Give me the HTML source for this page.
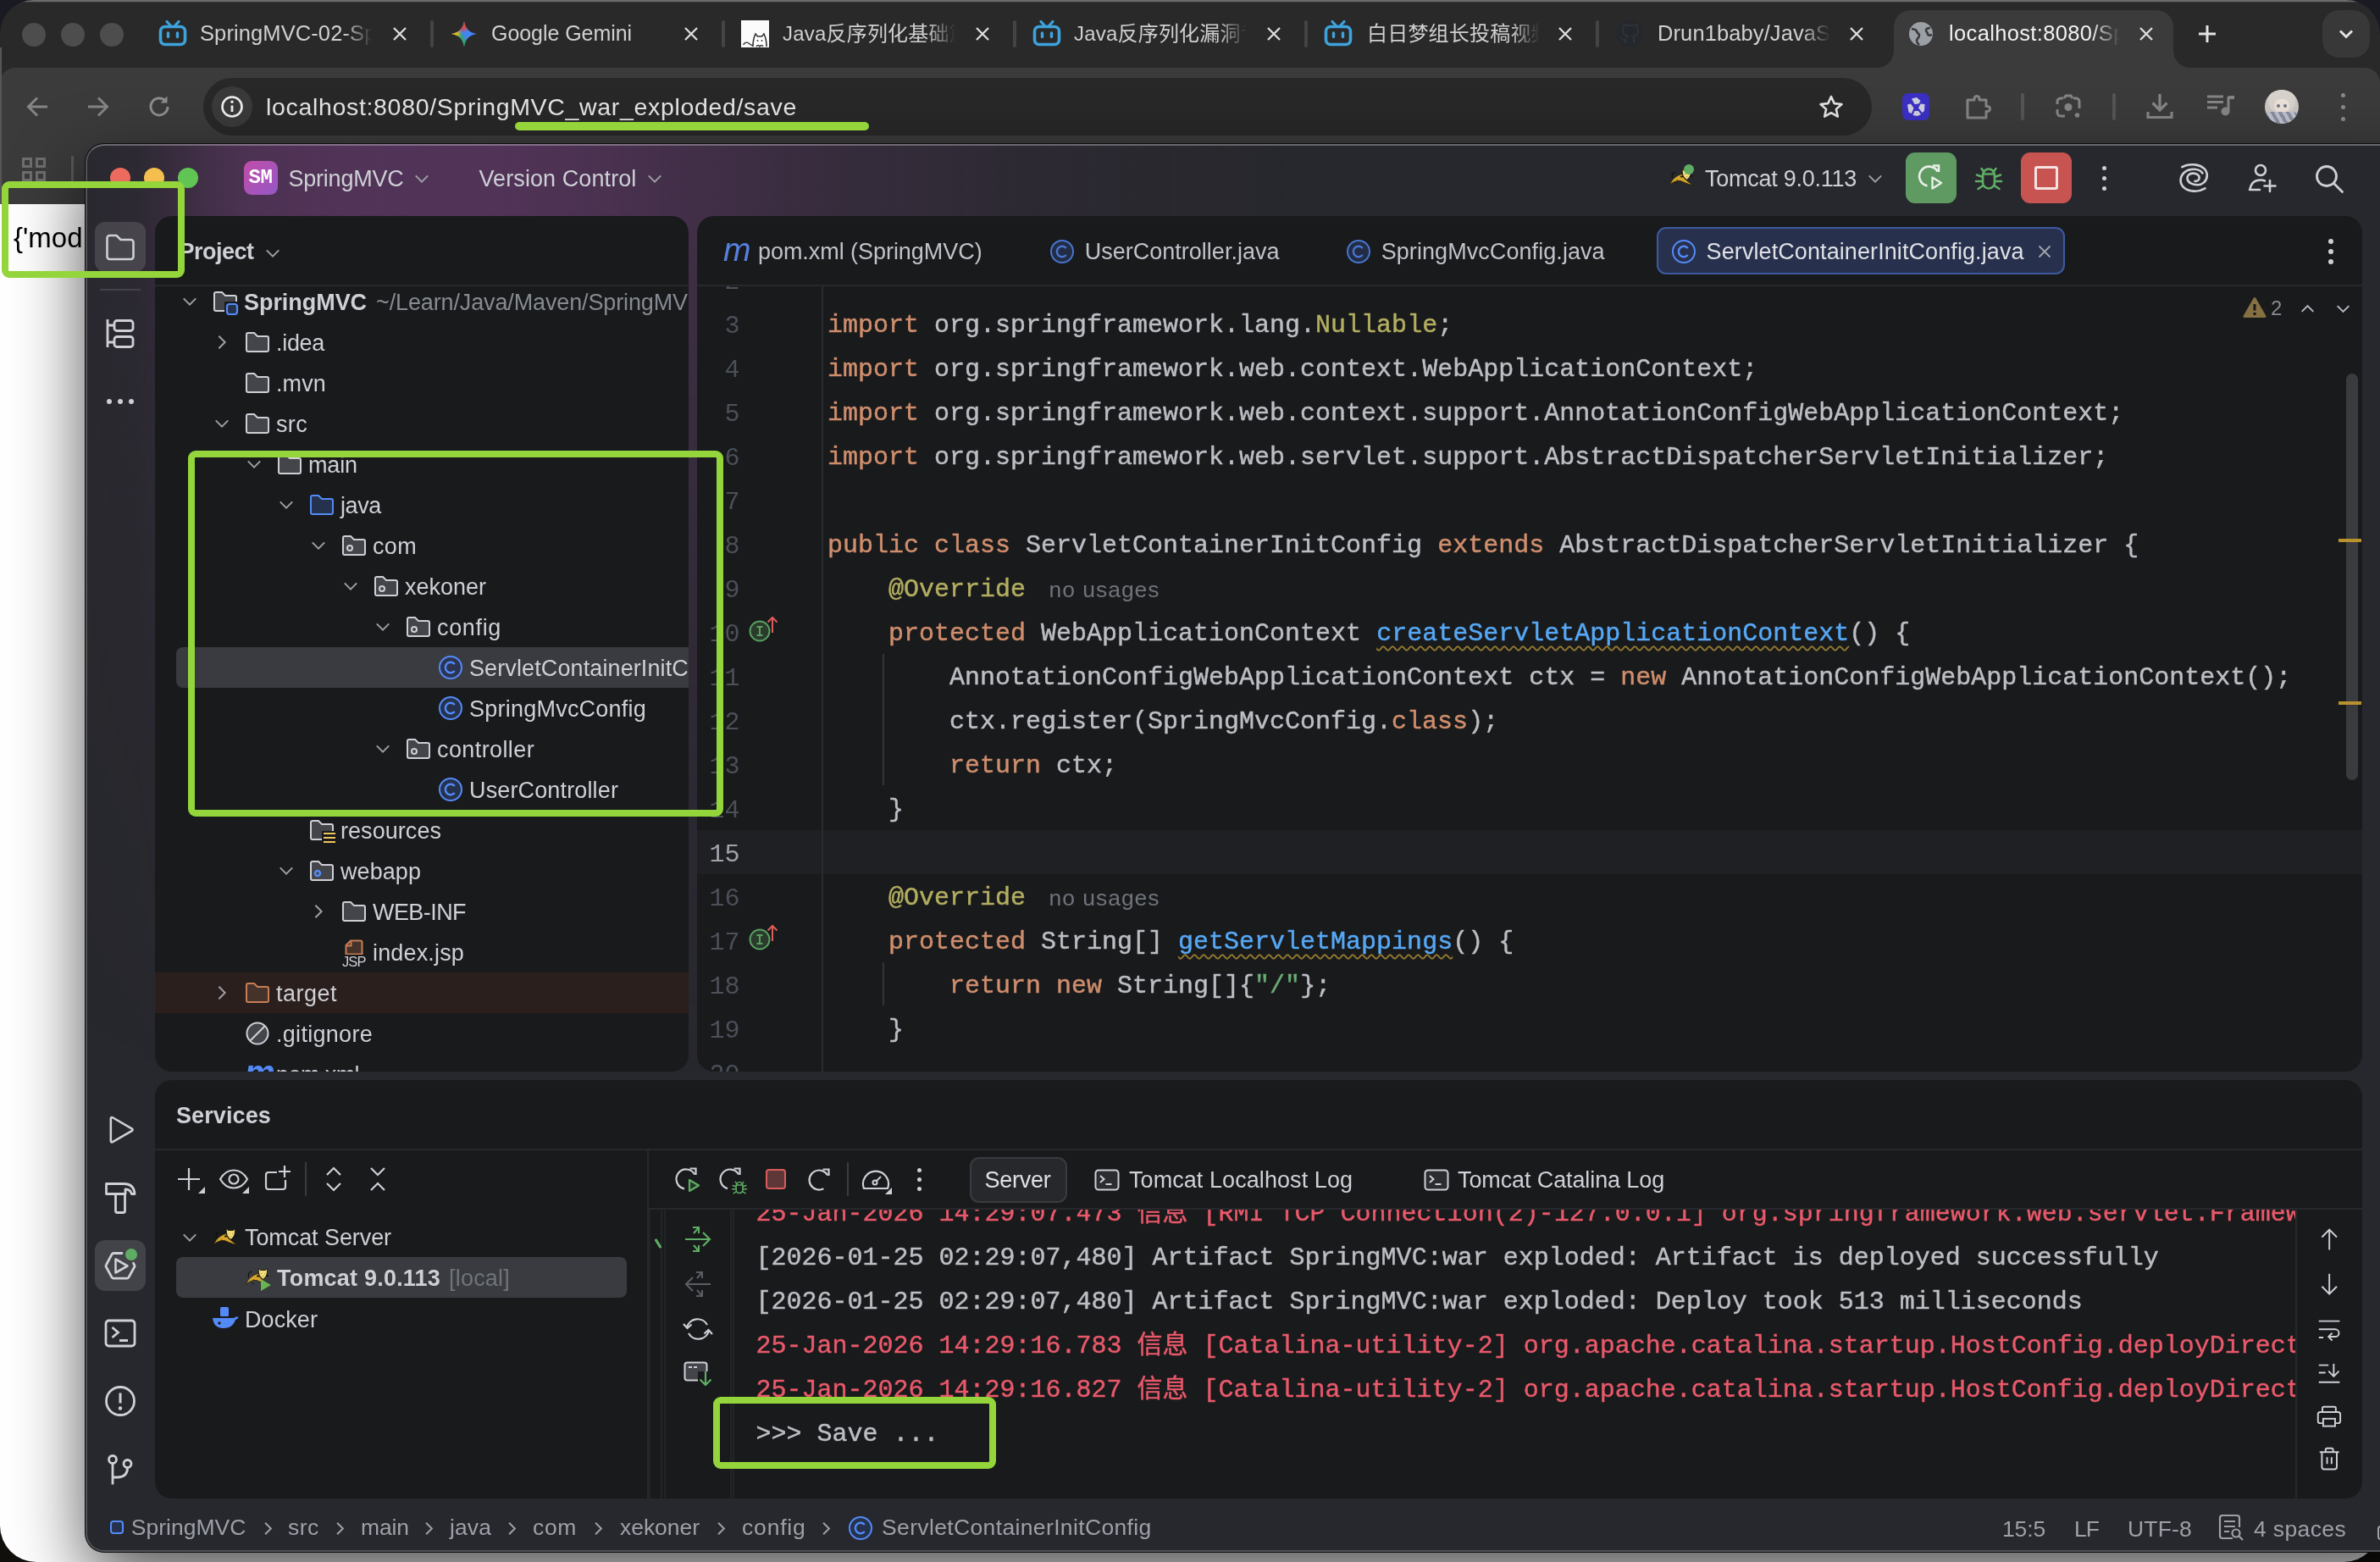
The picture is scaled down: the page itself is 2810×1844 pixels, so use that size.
<!DOCTYPE html>
<html lang="zh"><head><meta charset="utf-8"><title>localhost:8080/SpringMVC_war_exploded/save</title><style>
html,body{margin:0;padding:0;background:#17171b;}
body{width:2810px;height:1844px;position:relative;overflow:hidden;}
#root{position:absolute;left:0;top:0;width:2810px;height:1844px;overflow:hidden;will-change:transform;transform:translateZ(0);}
.a{position:absolute;white-space:nowrap;}
svg.a{overflow:visible;}
.u{font-family:"Liberation Sans","Noto Sans CJK SC",sans-serif;}
.t{font-family:"Liberation Sans","Noto Sans CJK SC",sans-serif;}
.m{font-family:"Liberation Mono","Noto Sans CJK SC",monospace;}
.code{font-size:30px;line-height:52px;white-space:pre;color:#bcbec4;-webkit-text-stroke:0.45px currentColor;}
</style></head><body><div id="root">
<div class="a" style="left:0;top:0;width:2810px;height:1844px;background:linear-gradient(180deg,#1a1a22,#12100c)"></div>
<div class="a" id="bw" style="left:0px;top:0;width:2810px;height:1844px;border-radius:40px 40px 43px 43px;background:#292929;overflow:hidden;">
<div class="a" style="left:0px;top:0;width:2810px;height:1852px">
<div class="a " style="left:0px;top:0px;width:2810px;height:2px;background:#6b6b6b;"></div>
<div class="a " style="left:0px;top:2px;width:2810px;height:1px;background:#3a3a3a;"></div>
<div class="a " style="left:0px;top:80px;width:2810px;height:161px;background:#3b3b3b;border-radius:18px 18px 0 0;"></div>
<div class="a " style="left:0px;top:56px;width:2px;height:185px;background:#565656;"></div>
<div class="a " style="left:0px;top:241px;width:2810px;height:1611px;background:#ffffff;"></div>
<div class="a " style="left:2236px;top:12px;width:330px;height:80px;background:#3b3b3b;border-radius:20px 20px 0 0;"></div>
<svg class="a" style="left:2216px;top:60px" width="20" height="20"><path d="M20 0 V20 H0 A20 20 0 0 0 20 0Z" fill="#3b3b3b"/></svg>
<svg class="a" style="left:2566px;top:60px" width="20" height="20"><path d="M0 0 V20 H20 A20 20 0 0 1 0 0Z" fill="#3b3b3b"/></svg>
<div class="a " style="left:2742px;top:12px;width:56px;height:56px;background:#383838;border-radius:20px;"></div>
<svg class="a" style="left:2758.0px;top:28.0px;" width="24" height="24" viewBox="0 0 24 24" fill="none"><path d="M5 8.5l7 7 7-7" stroke="#e3e3e3" stroke-width="3"/></svg>
<div class="a " style="left:26px;top:27px;width:28px;height:28px;background:#4d4d4d;border-radius:14px;"></div>
<div class="a " style="left:72px;top:27px;width:28px;height:28px;background:#4d4d4d;border-radius:14px;"></div>
<div class="a " style="left:118px;top:27px;width:28px;height:28px;background:#4d4d4d;border-radius:14px;"></div>
<div class="a t" style="left:236px;top:21px;width:204px;height:40px;line-height:37px;font-size:25.5px;color:#d0d0d0;overflow:hidden;white-space:nowrap;letter-spacing:0.1px">SpringMVC-02-Sp</div>
<div class="a" style="left:406px;top:22px;width:34px;height:40px;background:linear-gradient(90deg,rgba(0,0,0,0),#292929)"></div>
<svg class="a" style="left:461.0px;top:29.0px;" width="22" height="22" viewBox="0 0 22 22" fill="none"><path d="M4 4l14 14M18 4L4 18" stroke="#dedede" stroke-width="2.3"/></svg>
<div class="a " style="left:508px;top:24px;width:4px;height:32px;background:#444444;border-radius:2px;"></div>
<svg class="a" style="left:187.0px;top:23.0px;" width="34" height="34" viewBox="0 0 34 34" fill="none"><path d="M10 2.5l4.5 5M24 2.5l-4.5 5" stroke="#3ea3dc" stroke-width="3.2" stroke-linecap="round"/><rect x="2.5" y="8.5" width="29" height="21" rx="5.5" stroke="#3ea3dc" stroke-width="3.6"/><path d="M11.5 16v4.5M22.5 16v4.5" stroke="#3ea3dc" stroke-width="3.4" stroke-linecap="round"/></svg>
<div class="a t" style="left:580px;top:21px;width:200px;height:40px;line-height:37px;font-size:25px;color:#d0d0d0;overflow:hidden;white-space:nowrap;letter-spacing:-0.05px">Google Gemini</div>
<svg class="a" style="left:805.0px;top:29.0px;" width="22" height="22" viewBox="0 0 22 22" fill="none"><path d="M4 4l14 14M18 4L4 18" stroke="#dedede" stroke-width="2.3"/></svg>
<div class="a " style="left:852px;top:24px;width:4px;height:32px;background:#444444;border-radius:2px;"></div>
<svg class="a" style="left:533.0px;top:25.0px;" width="30" height="30" viewBox="0 0 30 30" fill="none"><defs><clipPath id="gs"><path d="M15 0C16.600 9 21 13.400 30 15 21 16.600 16.600 21 15 30 13.400 21 9 16.600 0 15 9 13.400 13.400 9 15 0Z"/></clipPath><radialGradient id="gr"><stop offset="0" stop-color="#ea4335"/><stop offset="0.55" stop-color="#ea4335" stop-opacity="0.85"/><stop offset="1" stop-color="#ea4335" stop-opacity="0"/></radialGradient><radialGradient id="gy"><stop offset="0" stop-color="#fbbc04"/><stop offset="0.55" stop-color="#fbbc04" stop-opacity="0.85"/><stop offset="1" stop-color="#fbbc04" stop-opacity="0"/></radialGradient><radialGradient id="gn"><stop offset="0" stop-color="#34a853"/><stop offset="0.55" stop-color="#34a853" stop-opacity="0.85"/><stop offset="1" stop-color="#34a853" stop-opacity="0"/></radialGradient></defs><g clip-path="url(#gs)"><rect width="30" height="30" fill="#4285f4"/><circle cx="6" cy="24" r="13" fill="url(#gn)"/><circle cx="13" cy="2" r="12" fill="url(#gr)"/><circle cx="1" cy="14" r="11" fill="url(#gy)"/><circle cx="14" cy="30" r="9" fill="url(#gn)"/></g></svg>
<div class="a t" style="left:924px;top:21px;width:204px;height:40px;line-height:37px;font-size:24px;color:#d0d0d0;overflow:hidden;white-space:nowrap;letter-spacing:0.2px">Java反序列化基础篇</div>
<div class="a" style="left:1094px;top:22px;width:34px;height:40px;background:linear-gradient(90deg,rgba(0,0,0,0),#292929)"></div>
<svg class="a" style="left:1149.0px;top:29.0px;" width="22" height="22" viewBox="0 0 22 22" fill="none"><path d="M4 4l14 14M18 4L4 18" stroke="#dedede" stroke-width="2.3"/></svg>
<div class="a " style="left:1196px;top:24px;width:4px;height:32px;background:#444444;border-radius:2px;"></div>
<div class="a " style="left:875px;top:24px;width:33px;height:32px;background:#fbfbfb;"></div>
<svg class="a" style="left:875.5px;top:29.0px;" width="33" height="26" viewBox="0 0 33 26" fill="none"><path d="M13 26c0-6 1-11 3-15l2.500 3h5l2.500-3c2 4 3 9 3 15" stroke="#333" stroke-width="1.600" fill="#fff"/><path d="M2 24c0-3 4-3.500 6-2 1.500 1 3 3 5 3" stroke="#333" stroke-width="1.400"/><circle cx="18.500" cy="19" r="0.900" fill="#333"/><circle cx="23.500" cy="19" r="0.900" fill="#333"/><path d="M17 26c1-2 3-2 4 0 1-2 3-2 4 0" stroke="#333" stroke-width="1.300"/></svg>
<div class="a t" style="left:1268px;top:21px;width:204px;height:40px;line-height:37px;font-size:24px;color:#d0d0d0;overflow:hidden;white-space:nowrap;letter-spacing:0.2px">Java反序列化漏洞专</div>
<div class="a" style="left:1438px;top:22px;width:34px;height:40px;background:linear-gradient(90deg,rgba(0,0,0,0),#292929)"></div>
<svg class="a" style="left:1493.0px;top:29.0px;" width="22" height="22" viewBox="0 0 22 22" fill="none"><path d="M4 4l14 14M18 4L4 18" stroke="#dedede" stroke-width="2.3"/></svg>
<div class="a " style="left:1540px;top:24px;width:4px;height:32px;background:#444444;border-radius:2px;"></div>
<svg class="a" style="left:1219.0px;top:23.0px;" width="34" height="34" viewBox="0 0 34 34" fill="none"><path d="M10 2.5l4.5 5M24 2.5l-4.5 5" stroke="#3ea3dc" stroke-width="3.2" stroke-linecap="round"/><rect x="2.5" y="8.5" width="29" height="21" rx="5.5" stroke="#3ea3dc" stroke-width="3.6"/><path d="M11.5 16v4.5M22.5 16v4.5" stroke="#3ea3dc" stroke-width="3.4" stroke-linecap="round"/></svg>
<div class="a t" style="left:1614px;top:21px;width:204px;height:40px;line-height:37px;font-size:24px;color:#d0d0d0;overflow:hidden;white-space:nowrap;letter-spacing:0.2px">白日梦组长投稿视频</div>
<div class="a" style="left:1784px;top:22px;width:34px;height:40px;background:linear-gradient(90deg,rgba(0,0,0,0),#292929)"></div>
<svg class="a" style="left:1837.0px;top:29.0px;" width="22" height="22" viewBox="0 0 22 22" fill="none"><path d="M4 4l14 14M18 4L4 18" stroke="#dedede" stroke-width="2.3"/></svg>
<div class="a " style="left:1884px;top:24px;width:4px;height:32px;background:#444444;border-radius:2px;"></div>
<svg class="a" style="left:1563.0px;top:23.0px;" width="34" height="34" viewBox="0 0 34 34" fill="none"><path d="M10 2.5l4.5 5M24 2.5l-4.5 5" stroke="#3ea3dc" stroke-width="3.2" stroke-linecap="round"/><rect x="2.5" y="8.5" width="29" height="21" rx="5.5" stroke="#3ea3dc" stroke-width="3.6"/><path d="M11.5 16v4.5M22.5 16v4.5" stroke="#3ea3dc" stroke-width="3.4" stroke-linecap="round"/></svg>
<div class="a t" style="left:1957px;top:21px;width:204px;height:40px;line-height:37px;font-size:25.5px;color:#d0d0d0;overflow:hidden;white-space:nowrap;letter-spacing:0.1px">Drun1baby/JavaSec</div>
<div class="a" style="left:2127px;top:22px;width:34px;height:40px;background:linear-gradient(90deg,rgba(0,0,0,0),#292929)"></div>
<svg class="a" style="left:2181.0px;top:29.0px;" width="22" height="22" viewBox="0 0 22 22" fill="none"><path d="M4 4l14 14M18 4L4 18" stroke="#dedede" stroke-width="2.3"/></svg>
<svg class="a" style="left:1908.0px;top:24.0px;" width="32" height="32" viewBox="0 0 32 32" fill="none"><circle cx="16" cy="16" r="15.5" fill="#24272c"/><path d="M11 27v-4c-4 1-5-2-6-3M21 27v-5c0-2-1-3-1-3 4-.5 6-2.500 6-6.500 0-1.500-.5-3-1.500-4 .3-1 .3-2.500-.2-3.500 0 0-1.500 0-3.500 1.500-2.500-.700-5-.700-7.500 0C11 4.500 9.500 4.500 9.500 4.500 9 5.500 9 7 9.300 8 8.300 9 7.800 10.500 7.800 12c0 4 2 6 6 6.500-.500.500-1 1.500-1 3" stroke="#2f3339" stroke-width="2"/></svg>
<div class="a t" style="left:2301px;top:21px;width:202px;height:40px;line-height:37px;font-size:25.5px;color:#f1f1f1;overflow:hidden;white-space:nowrap;letter-spacing:0.35px">localhost:8080/SpringMVC</div>
<div class="a" style="left:2469px;top:22px;width:34px;height:40px;background:linear-gradient(90deg,rgba(0,0,0,0),#3b3b3b)"></div>
<svg class="a" style="left:2523.0px;top:29.0px;" width="22" height="22" viewBox="0 0 22 22" fill="none"><path d="M4 4l14 14M18 4L4 18" stroke="#dedede" stroke-width="2.3"/></svg>
<svg class="a" style="left:2253.0px;top:25.0px;" width="30" height="30" viewBox="0 0 30 30" fill="none"><circle cx="15" cy="15" r="14" fill="#9aa0a6"/><path d="M4 9c3 1 5 0 6 3s3 2 3 5-3 3-3 6 2 4 3 5M26 8c-3 0-5 1-5 3s2 2 2 4 3 2 5 1" stroke="#3b3b3b" stroke-width="2.6" fill="none"/></svg>
<svg class="a" style="left:2591.0px;top:25.0px;" width="30" height="30" viewBox="0 0 30 30" fill="none"><path d="M15 5v20M5 15h20" stroke="#e3e3e3" stroke-width="3"/></svg>
<div class="a " style="left:240px;top:92px;width:1970px;height:68px;background:#282828;border-radius:34px;"></div>
<div class="a " style="left:250px;top:102px;width:48px;height:48px;background:#3a3a3a;border-radius:24px;"></div>
<svg class="a" style="left:260.0px;top:112.0px;" width="28" height="28" viewBox="0 0 28 28" fill="none"><circle cx="14" cy="14" r="11.5" stroke="#f0f0f0" stroke-width="2.6"/><path d="M14 12.500v7.500" stroke="#f0f0f0" stroke-width="2.8"/><circle cx="14" cy="8.300" r="1.700" fill="#f0f0f0"/></svg>
<div class="a t" style="top:106.0px;line-height:40px;font-size:28.5px;color:#e6e6e6;left:314.0px;letter-spacing:0.67px;">localhost:8080/SpringMVC_war_exploded/save</div>
<svg class="a" style="left:30.0px;top:112.0px;" width="28" height="28" viewBox="0 0 28 28" fill="none"><path d="M26 14H4M14 3.500L3.500 14 14 24.500" stroke="#858585" stroke-width="3"/></svg>
<svg class="a" style="left:102.0px;top:112.0px;" width="28" height="28" viewBox="0 0 28 28" fill="none"><path d="M2 14h22M14 3.500L24.500 14 14 24.500" stroke="#858585" stroke-width="3"/></svg>
<svg class="a" style="left:173.0px;top:111.0px;" width="30" height="30" viewBox="0 0 30 30" fill="none"><path d="M25 15a10 10 0 1 1-3-7.200" stroke="#8d8d8d" stroke-width="3"/><path d="M24.500 2.500v8h-8z" fill="#8d8d8d"/></svg>
<svg class="a" style="left:2147.0px;top:111.0px;" width="30" height="30" viewBox="0 0 30 30" fill="none"><path d="M15 3l3.700 8.100 8.800.9-6.600 5.900 1.900 8.700L15 22.200 7.200 26.600l1.900-8.700L2.500 12l8.800-.9z" stroke="#e3e3e3" stroke-width="2.600" stroke-linejoin="round"/></svg>
<div class="a " style="left:2246px;top:110px;width:32px;height:32px;background:#3b30c4;border-radius:7px;"></div>
<svg class="a" style="left:2246.0px;top:110.0px;" width="32" height="32" viewBox="0 0 32 32" fill="none"><g fill="#cfcfe0"><path d="M11 6.500l6-1.500 4.500 4-2 3.500-5 .5z"/><path d="M6 13.500l4-1 3.500 5-2.500 6.500-3.500-1.500z"/><path d="M26.500 13l-5-.5-2.500 5 4.500 5.500 2.500-2z"/><path d="M12.500 26l2-5h4.500l3 4-4 2z"/></g></svg>
<svg class="a" style="left:2318.0px;top:109.0px;" width="34" height="34" viewBox="0 0 34 34" fill="none"><path d="M5 9h8V7.500a3 3 0 0 1 6 0V9h8v7.500h1.500a3 3 0 0 1 0 6H27V30H5z" stroke="#858585" stroke-width="3" stroke-linejoin="round"/></svg>
<div class="a " style="left:2386px;top:110px;width:4px;height:32px;background:#555;border-radius:2px;"></div>
<svg class="a" style="left:2425.0px;top:109.0px;" width="34" height="34" viewBox="0 0 34 34" fill="none"><path d="M12 7l2-3h6l2 3" stroke="#858585" stroke-width="3"/><path d="M11 7H8a4 4 0 0 0-4 4v3M4 20v4a4 4 0 0 0 4 4h5M23 7h3a4 4 0 0 1 4 4v8" stroke="#858585" stroke-width="3"/><circle cx="17" cy="17.500" r="4.500" fill="#858585"/><circle cx="27.500" cy="27" r="2.800" fill="#858585"/></svg>
<div class="a " style="left:2494px;top:110px;width:4px;height:32px;background:#555;border-radius:2px;"></div>
<svg class="a" style="left:2533.0px;top:109.0px;" width="34" height="34" viewBox="0 0 34 34" fill="none"><path d="M17 2v18M8.500 12.500L17 21l8.500-8.500M3 23v6.500h28V23" stroke="#858585" stroke-width="3.200"/></svg>
<svg class="a" style="left:2605.0px;top:110.0px;" width="34" height="28" viewBox="0 0 34 28" fill="none"><path d="M1 4h19M1 10.500h19M1 17h12" stroke="#858585" stroke-width="3"/><path d="M26 4v17" stroke="#858585" stroke-width="3"/><path d="M26 3h7v4h-7z" fill="#858585"/><circle cx="22.500" cy="21.500" r="5" fill="#858585"/></svg>
<div class="a" style="left:2674px;top:106px;width:40px;height:40px;border-radius:20px;overflow:hidden;background:#c9c6c4"><div class="a" style="left:4px;top:-2px;width:32px;height:30px;border-radius:16px;background:#d9d3cd"></div><div class="a" style="left:11px;top:11px;width:18px;height:16px;border-radius:8px;background:#ece2da"></div><div class="a" style="left:14px;top:17px;width:4px;height:4px;border-radius:2px;background:#6d7487"></div><div class="a" style="left:22px;top:17px;width:4px;height:4px;border-radius:2px;background:#6d7487"></div><div class="a" style="left:-2px;top:26px;width:44px;height:18px;border-radius:9px 9px 0 0;background:repeating-linear-gradient(60deg,#8a90a2 0 4px,#bfc3cd 4px 8px)"></div></div>
<div class="a " style="left:2763.5px;top:109.5px;width:5px;height:5px;background:#8a8a8a;border-radius:3px;"></div>
<div class="a " style="left:2763.5px;top:123.5px;width:5px;height:5px;background:#8a8a8a;border-radius:3px;"></div>
<div class="a " style="left:2763.5px;top:137.5px;width:5px;height:5px;background:#8a8a8a;border-radius:3px;"></div>
<svg class="a" style="left:25.0px;top:185.0px;" width="30" height="30" viewBox="0 0 30 30" fill="none"><path d="M2.500 2.500h9v9h-9zM18.500 2.500h9v9h-9zM2.500 18.500h9v9h-9zM18.500 18.500h9v9h-9z" stroke="#6e6e6e" stroke-width="3"/></svg>
<div class="a " style="left:84px;top:184px;width:3px;height:34px;background:#5a5a5a;border-radius:1px;"></div>
<div class="a t" style="top:261.0px;line-height:40px;font-size:33px;color:#000;left:16.0px;">{'mod</div>
</div></div>
<div class="a" style="left:101px;top:170px;width:2760px;height:1662px;border-radius:22px;background:#27282d;box-shadow:0 0 0 1px #0b0b0c, 0 32px 84px 0 rgba(0,0,0,0.680);"></div>
<div class="a" style="left:102px;top:170px;width:2708px;height:1200px;border-radius:22px 0 0 0;background:linear-gradient(90deg,rgba(84,52,90,0.06) 0px,rgba(84,52,90,0.13) 60px,rgba(84,52,90,0.36) 100px,rgba(84,52,90,0.66) 150px,rgba(84,52,90,0.86) 200px,rgba(84,52,90,0.95) 300px,rgba(84,52,90,0.97) 470px,rgba(84,52,90,0.80) 600px,rgba(84,52,90,0.62) 700px,rgba(84,52,90,0.33) 900px,rgba(84,52,90,0.14) 1100px,rgba(84,52,90,0.04) 1300px,rgba(84,52,90,0) 1420px);-webkit-mask-image:linear-gradient(180deg,#000 0px,#000 90px,rgba(0,0,0,0.75) 250px,rgba(0,0,0,0.45) 500px,rgba(0,0,0,0.15) 800px,rgba(0,0,0,0) 1100px);mask-image:linear-gradient(180deg,#000 0px,#000 90px,rgba(0,0,0,0.75) 250px,rgba(0,0,0,0.45) 500px,rgba(0,0,0,0.15) 800px,rgba(0,0,0,0) 1100px);"></div>
<div class="a" style="left:101px;top:170px;width:2760px;height:1662px;border-radius:22px;box-sizing:border-box;border:2px solid rgba(255,255,255,0.200);border-top-color:rgba(255,255,255,0.300)"></div>
<div class="a " style="left:130px;top:198px;width:24px;height:24px;background:#ed6a5e;border-radius:12px;"></div>
<div class="a " style="left:170px;top:198px;width:24px;height:24px;background:#f5bf4f;border-radius:12px;"></div>
<div class="a " style="left:210px;top:198px;width:24px;height:24px;background:#61c554;border-radius:12px;"></div>
<div class="a" style="left:288px;top:190px;width:40px;height:40px;border-radius:9px;background:linear-gradient(135deg,#c24daa,#9458c4)"></div>
<div class="a m" style="top:195.0px;line-height:30px;font-size:24px;color:#fff;left:293.5px;font-weight:bold;letter-spacing:-0.5px;">SM</div>
<div class="a u" style="top:194.0px;line-height:34px;font-size:27px;color:#ced0d6;left:340.5px;letter-spacing:-0.23px;">SpringMVC</div>
<svg class="a" style="left:489.0px;top:202.0px;" width="18.0" height="18.0" viewBox="0 0 20 18" fill="none"><path d="M2 5l8 8 8-8" stroke="#9da0a8" stroke-width="2.2222222222222223"/></svg>
<div class="a u" style="top:194.0px;line-height:34px;font-size:27px;color:#ced0d6;left:565.5px;letter-spacing:0.09px;">Version Control</div>
<svg class="a" style="left:764.0px;top:202.0px;" width="18.0" height="18.0" viewBox="0 0 20 18" fill="none"><path d="M2 5l8 8 8-8" stroke="#9da0a8" stroke-width="2.2222222222222223"/></svg>
<svg class="a" style="left:1969.0px;top:195.0px;" width="32.0" height="28.0" viewBox="0 0 32 28" fill="none"><path d="M5.500 15C4.500 11 6 8 9.500 8.500" stroke="#0c0c0c" stroke-width="1.100"/><path d="M2.500 23C5 17 10 12 17 10.500L19 15C22 18 26 21 29.500 23.500 24 22.500 19 20 15 18.500 10 18 6 20 2.500 23Z" fill="#d4a52a" stroke="#1a1408" stroke-width="0.700"/><ellipse cx="16.500" cy="13.500" rx="1.600" ry="1.100" fill="#0c0c0c"/><ellipse cx="27.600" cy="13" rx="1.500" ry="1.100" fill="#0c0c0c"/><path d="M9 21l3 2M11 17.500l1.500 1" stroke="#1a1408" stroke-width="0.900"/><path d="M17 4.500L19.500 6.500 25.500 6.500 27.800 4.500 27.300 10C26.800 13.500 24.500 16 22.500 17.200 20.500 16 18 13.500 17.500 10Z" fill="#f3dc7a" stroke="#1a1408" stroke-width="0.900"/><path d="M20 10.500h1.200M24 10.500h1.200M21.500 13.500l1 .8 1-.8" stroke="#a08a3a" stroke-width="0.700"/></svg>
<div class="a " style="left:1988px;top:194px;width:12px;height:12px;background:#5fad65;border-radius:6px;"></div>
<div class="a u" style="top:194.0px;line-height:34px;font-size:27px;color:#ced0d6;left:2013.0px;letter-spacing:-0.26px;">Tomcat 9.0.113</div>
<svg class="a" style="left:2205.0px;top:202.0px;" width="18.0" height="18.0" viewBox="0 0 20 18" fill="none"><path d="M2 5l8 8 8-8" stroke="#9da0a8" stroke-width="2.2222222222222223"/></svg>
<div class="a " style="left:2250px;top:180px;width:60px;height:60px;background:#5f9a62;border-radius:11px;"></div>
<svg class="a" style="left:2260.0px;top:190.0px;" width="40" height="40" viewBox="0 0 40 40" fill="none"><path d="M27.700 12.500A11.500 11.500 0 1 0 15.500 29.400" stroke="#e8efe8" stroke-width="2.600"/><path d="M22 5.500h7v7.500" stroke="#e8efe8" stroke-width="2.600"/><path d="M21.500 19.500v13l10.500-6.500z" stroke="#e8efe8" stroke-width="2.400" stroke-linejoin="round" fill="#5f9a62"/></svg>
<svg class="a" style="left:2330.0px;top:193.0px;" width="36.0" height="36.0" viewBox="0 0 36 36" fill="none"><path d="M11 13.500a7 7 0 0 1 14 0v9a7 7 0 0 1-14 0z" stroke="#5fad65" stroke-width="2.600"/><path d="M12.500 10l-3-4M23.500 10l3-4M11 16l-7-2.500M25 16l7-2.500M11 21H3M25 21h8M11.500 26l-6 4M24.500 26l6 4" stroke="#5fad65" stroke-width="2.600" stroke-linecap="round"/><path d="M11.500 12.500h13" stroke="#5fad65" stroke-width="2.400"/></svg>
<div class="a " style="left:2386px;top:180px;width:60px;height:60px;background:#c75450;border-radius:11px;"></div>
<div class="a " style="left:2402px;top:196px;width:28px;height:28px;border-radius:3px;border:3px solid #f3e4e3;box-sizing:border-box;"></div>
<div class="a " style="left:2481.5px;top:195.5px;width:5px;height:5px;background:#ced0d6;border-radius:3px;"></div>
<div class="a " style="left:2481.5px;top:207.5px;width:5px;height:5px;background:#ced0d6;border-radius:3px;"></div>
<div class="a " style="left:2481.5px;top:219.5px;width:5px;height:5px;background:#ced0d6;border-radius:3px;"></div>
<svg class="a" style="left:2570.0px;top:191.0px;" width="40" height="40" viewBox="0 0 40 40" fill="none"><path d="M6.300 6.200C12 3 18 2.800 23 3.600 31 5 36 10 35.800 16.400 35.600 23 30 27.500 24.400 27.300 19 27.200 13 25 12.500 19.800 12.200 16 15 13.800 19 13.600 23 13.400 26.500 15.500 26.700 18.700 26.800 21.500 24 23.300 21.500 22.700" stroke="#ced0d6" stroke-width="2.600" stroke-linecap="round"/><path d="M33.500 31.400C29 34 24 35 19.900 34.600 11 34 4.500 29 4.600 22.100 4.700 15 10 10 17 9 22 8.300 28 9.500 30.500 13.500" stroke="#ced0d6" stroke-width="2.600" stroke-linecap="round"/></svg>
<svg class="a" style="left:2652.0px;top:191.0px;" width="40" height="40" viewBox="0 0 40 40" fill="none"><circle cx="17" cy="10" r="6" stroke="#ced0d6" stroke-width="2.600"/><path d="M4.500 33c1-8 5.500-11.500 12.500-11.500 2 0 3.500.3 5 1M28 22v13M21.500 28.500h13M4 33h12" stroke="#ced0d6" stroke-width="2.600" stroke-linecap="round"/></svg>
<svg class="a" style="left:2730.0px;top:191.0px;" width="40" height="40" viewBox="0 0 40 40" fill="none"><circle cx="17" cy="17" r="11.500" stroke="#ced0d6" stroke-width="2.800"/><path d="M25.500 25.500l10 10" stroke="#ced0d6" stroke-width="2.800" stroke-linecap="round"/></svg>
<div class="a " style="left:112px;top:262px;width:60px;height:59px;background:rgba(255,255,255,0.130);border-radius:12px;"></div>
<svg class="a" style="left:122.0px;top:272.0px;" width="40" height="40" viewBox="0 0 40 40" fill="none"><path d="M4.500 9a3 3 0 0 1 3-3h8l5 5h12a3 3 0 0 1 3 3v17a3 3 0 0 1-3 3h-25a3 3 0 0 1-3-3z" stroke="#ced0d6" stroke-width="2.600"/></svg>
<div class="a " style="left:118px;top:341px;width:48px;height:2px;background:#43424a;"></div>
<svg class="a" style="left:122.0px;top:374.0px;" width="40" height="40" viewBox="0 0 40 40" fill="none"><path d="M5 3v33M5 10h8M5 30h8" stroke="#ced0d6" stroke-width="2.800"/><rect x="13" y="4.500" width="22" height="12" rx="3" stroke="#ced0d6" stroke-width="2.800"/><rect x="13" y="23.500" width="22" height="12" rx="3" stroke="#ced0d6" stroke-width="2.800"/></svg>
<div class="a " style="left:126px;top:471px;width:6px;height:6px;background:#ced0d6;border-radius:3px;"></div>
<div class="a " style="left:139px;top:471px;width:6px;height:6px;background:#ced0d6;border-radius:3px;"></div>
<div class="a " style="left:152px;top:471px;width:6px;height:6px;background:#ced0d6;border-radius:3px;"></div>
<svg class="a" style="left:122.0px;top:1314.0px;" width="40" height="40" viewBox="0 0 40 40" fill="none"><path d="M7.500 5.500v29a1.500 1.500 0 0 0 2.300 1.200l25-14.500a1.500 1.500 0 0 0 0-2.500l-25-14.500A1.500 1.500 0 0 0 7.500 5.500z" stroke="#ced0d6" stroke-width="2.800" transform="translate(1,0) scale(0.92) translate(1,1.500)"/></svg>
<svg class="a" style="left:122.0px;top:1394.0px;" width="40" height="40" viewBox="0 0 40 40" fill="none"><path d="M3.500 3.500H24C32 3.500 36.500 8 37 15.500H33.300C32.500 11.800 30 10 26 10V15.500H3.500Z" stroke="#ced0d6" stroke-width="2.800" stroke-linejoin="round"/><path d="M14.500 16v19.500a2 2 0 0 0 2 2h7a2 2 0 0 0 2-2V16" stroke="#ced0d6" stroke-width="2.800"/></svg>
<div class="a " style="left:112px;top:1464px;width:60px;height:60px;background:rgba(255,255,255,0.130);border-radius:12px;"></div>
<svg class="a" style="left:122.0px;top:1474.0px;" width="40" height="40" viewBox="0 0 40 40" fill="none"><path d="M35.500 17.300l1.100 1.900a2.500 2.500 0 0 1 0 2.600L30 33.800a2.500 2.500 0 0 1-2.200 1.300H12.200a2.500 2.500 0 0 1-2.200-1.300L3.400 21.800a2.500 2.500 0 0 1 0-2.600L10 6.800a2.500 2.500 0 0 1 2.200-1.300H22" stroke="#ced0d6" stroke-width="2.800" stroke-linecap="round"/><path d="M14.500 12.500v16l14-8z" stroke="#ced0d6" stroke-width="2.600" stroke-linejoin="round"/></svg>
<div class="a " style="left:148px;top:1474px;width:14px;height:14px;background:#5fad65;border-radius:7px;"></div>
<svg class="a" style="left:122.0px;top:1554.0px;" width="40" height="40" viewBox="0 0 40 40" fill="none"><rect x="3" y="5" width="34" height="30" rx="3.500" stroke="#ced0d6" stroke-width="2.800"/><path d="M10.500 13l7 6-7 6M19 28.500h10" stroke="#ced0d6" stroke-width="2.800"/></svg>
<svg class="a" style="left:122.0px;top:1634.0px;" width="40" height="40" viewBox="0 0 40 40" fill="none"><circle cx="20" cy="20" r="16.500" stroke="#ced0d6" stroke-width="2.800"/><path d="M20 10.500v12" stroke="#ced0d6" stroke-width="3"/><circle cx="20" cy="28.500" r="2.200" fill="#ced0d6"/></svg>
<svg class="a" style="left:122.0px;top:1714.0px;" width="40" height="40" viewBox="0 0 40 40" fill="none"><circle cx="11" cy="9" r="4.500" stroke="#ced0d6" stroke-width="2.800"/><circle cx="28.500" cy="14" r="4.500" stroke="#ced0d6" stroke-width="2.800"/><path d="M11 13.500v25M28.500 18.500c0 8-4 11.500-12 11.500H11" stroke="#ced0d6" stroke-width="2.800"/></svg>
<div class="a " style="left:183px;top:255px;width:630px;height:1010px;background:#191a1c;border-radius:20px;"></div>
<div class="a" style="left:183px;top:255px;width:630px;height:1010px;border-radius:20px;overflow:hidden"><div class="a" style="left:-183px;top:-255px;width:2810px;height:1844px">
<div class="a u" style="top:280.0px;line-height:34px;font-size:27px;color:#ced0d6;left:211.5px;font-weight:bold;letter-spacing:-0.50px;">Project</div>
<svg class="a" style="left:313.0px;top:290.0px;" width="18.0" height="18.0" viewBox="0 0 20 18" fill="none"><path d="M2 5l8 8 8-8" stroke="#9da0a8" stroke-width="2.2222222222222223"/></svg>
<div class="a " style="left:183px;top:336px;width:630px;height:2px;background:#26282b;"></div>
<div class="a " style="left:208px;top:764px;width:620px;height:48px;background:#393b40;border-radius:8px;"></div>
<div class="a " style="left:183px;top:1148px;width:630px;height:48px;background:#2b1f1d;"></div>
<svg class="a" style="left:215.0px;top:347.0px;" width="18.0" height="18.0" viewBox="0 0 20 18" fill="none"><path d="M2 5l8 8 8-8" stroke="#9da0a8" stroke-width="2.2222222222222223"/></svg>
<svg class="a" style="left:250.0px;top:340.0px;" width="32" height="34" viewBox="0 0 32 34" fill="none"><path d="M3 7a2 2 0 0 1 2-2h7l4 4h11a2 2 0 0 1 2 2v14a2 2 0 0 1-2 2H5a2 2 0 0 1-2-2Z" stroke="#ced0d6" stroke-width="2" fill="#43454a"/><rect x="15" y="16" width="17" height="17" fill="#191a1c"/><rect x="18" y="19" width="12" height="12" rx="3" stroke="#548af7" stroke-width="2.200" fill="#25324d"/></svg>
<div class="a u" style="top:340.0px;line-height:34px;font-size:27px;color:#ced0d6;left:288.0px;font-weight:bold;letter-spacing:-0.05px;">SpringMVC</div>
<div class="a u" style="top:340.0px;line-height:34px;font-size:27px;color:#868a91;left:444.0px;letter-spacing:-0.13px;">~/Learn/Java/Maven/SpringMV</div>
<svg class="a" style="left:253.0px;top:395.0px;" width="18.0" height="18.0" viewBox="0 0 20 18" fill="none"><path d="M6 1l8 8-8 8" stroke="#9da0a8" stroke-width="2.2222222222222223"/></svg>
<svg class="a" style="left:288.0px;top:388.0px;" width="32" height="34" viewBox="0 0 32 34" fill="none"><path d="M3 7a2 2 0 0 1 2-2h7l4 4h11a2 2 0 0 1 2 2v14a2 2 0 0 1-2 2H5a2 2 0 0 1-2-2Z" stroke="#ced0d6" stroke-width="2" fill="#43454a"/></svg>
<div class="a u" style="top:388.0px;line-height:34px;font-size:27px;color:#ced0d6;left:326.0px;letter-spacing:-0.31px;">.idea</div>
<svg class="a" style="left:288.0px;top:436.0px;" width="32" height="34" viewBox="0 0 32 34" fill="none"><path d="M3 7a2 2 0 0 1 2-2h7l4 4h11a2 2 0 0 1 2 2v14a2 2 0 0 1-2 2H5a2 2 0 0 1-2-2Z" stroke="#ced0d6" stroke-width="2" fill="#43454a"/></svg>
<div class="a u" style="top:436.0px;line-height:34px;font-size:27px;color:#ced0d6;left:326.0px;letter-spacing:0.12px;">.mvn</div>
<svg class="a" style="left:253.0px;top:491.0px;" width="18.0" height="18.0" viewBox="0 0 20 18" fill="none"><path d="M2 5l8 8 8-8" stroke="#9da0a8" stroke-width="2.2222222222222223"/></svg>
<svg class="a" style="left:288.0px;top:484.0px;" width="32" height="34" viewBox="0 0 32 34" fill="none"><path d="M3 7a2 2 0 0 1 2-2h7l4 4h11a2 2 0 0 1 2 2v14a2 2 0 0 1-2 2H5a2 2 0 0 1-2-2Z" stroke="#ced0d6" stroke-width="2" fill="#43454a"/></svg>
<div class="a u" style="top:484.0px;line-height:34px;font-size:27px;color:#ced0d6;left:326.0px;letter-spacing:0.34px;">src</div>
<svg class="a" style="left:291.0px;top:539.0px;" width="18.0" height="18.0" viewBox="0 0 20 18" fill="none"><path d="M2 5l8 8 8-8" stroke="#9da0a8" stroke-width="2.2222222222222223"/></svg>
<svg class="a" style="left:326.0px;top:532.0px;" width="32" height="34" viewBox="0 0 32 34" fill="none"><path d="M3 7a2 2 0 0 1 2-2h7l4 4h11a2 2 0 0 1 2 2v14a2 2 0 0 1-2 2H5a2 2 0 0 1-2-2Z" stroke="#ced0d6" stroke-width="2" fill="#43454a"/></svg>
<div class="a u" style="top:532.0px;line-height:34px;font-size:27px;color:#ced0d6;left:364.0px;letter-spacing:-0.13px;">main</div>
<svg class="a" style="left:329.0px;top:587.0px;" width="18.0" height="18.0" viewBox="0 0 20 18" fill="none"><path d="M2 5l8 8 8-8" stroke="#9da0a8" stroke-width="2.2222222222222223"/></svg>
<svg class="a" style="left:364.0px;top:580.0px;" width="32" height="34" viewBox="0 0 32 34" fill="none"><path d="M3 7a2 2 0 0 1 2-2h7l4 4h11a2 2 0 0 1 2 2v14a2 2 0 0 1-2 2H5a2 2 0 0 1-2-2Z" stroke="#548af7" stroke-width="2" fill="#25324d"/></svg>
<div class="a u" style="top:580.0px;line-height:34px;font-size:27px;color:#ced0d6;left:402.0px;letter-spacing:-0.38px;">java</div>
<svg class="a" style="left:367.0px;top:635.0px;" width="18.0" height="18.0" viewBox="0 0 20 18" fill="none"><path d="M2 5l8 8 8-8" stroke="#9da0a8" stroke-width="2.2222222222222223"/></svg>
<svg class="a" style="left:402.0px;top:628.0px;" width="32" height="34" viewBox="0 0 32 34" fill="none"><path d="M3 7a2 2 0 0 1 2-2h7l4 4h11a2 2 0 0 1 2 2v14a2 2 0 0 1-2 2H5a2 2 0 0 1-2-2Z" stroke="#ced0d6" stroke-width="2" fill="#43454a"/><circle cx="11" cy="19" r="3" stroke="#ced0d6" stroke-width="2"/></svg>
<div class="a u" style="top:628.0px;line-height:34px;font-size:27px;color:#ced0d6;left:440.0px;letter-spacing:0.33px;">com</div>
<svg class="a" style="left:405.0px;top:683.0px;" width="18.0" height="18.0" viewBox="0 0 20 18" fill="none"><path d="M2 5l8 8 8-8" stroke="#9da0a8" stroke-width="2.2222222222222223"/></svg>
<svg class="a" style="left:440.0px;top:676.0px;" width="32" height="34" viewBox="0 0 32 34" fill="none"><path d="M3 7a2 2 0 0 1 2-2h7l4 4h11a2 2 0 0 1 2 2v14a2 2 0 0 1-2 2H5a2 2 0 0 1-2-2Z" stroke="#ced0d6" stroke-width="2" fill="#43454a"/><circle cx="11" cy="19" r="3" stroke="#ced0d6" stroke-width="2"/></svg>
<div class="a u" style="top:676.0px;line-height:34px;font-size:27px;color:#ced0d6;left:478.0px;letter-spacing:-0.01px;">xekoner</div>
<svg class="a" style="left:443.0px;top:731.0px;" width="18.0" height="18.0" viewBox="0 0 20 18" fill="none"><path d="M2 5l8 8 8-8" stroke="#9da0a8" stroke-width="2.2222222222222223"/></svg>
<svg class="a" style="left:478.0px;top:724.0px;" width="32" height="34" viewBox="0 0 32 34" fill="none"><path d="M3 7a2 2 0 0 1 2-2h7l4 4h11a2 2 0 0 1 2 2v14a2 2 0 0 1-2 2H5a2 2 0 0 1-2-2Z" stroke="#ced0d6" stroke-width="2" fill="#43454a"/><circle cx="11" cy="19" r="3" stroke="#ced0d6" stroke-width="2"/></svg>
<div class="a u" style="top:724.0px;line-height:34px;font-size:27px;color:#ced0d6;left:516.0px;letter-spacing:0.66px;">config</div>
<svg class="a" style="left:516.0px;top:772.0px;" width="32" height="32" viewBox="0 0 32 32" fill="none"><circle cx="16" cy="16" r="13" stroke="#548af7" stroke-width="2" fill="#2c3452"/><path d="M20.800 12a6.200 6.200 0 1 0 0 8" stroke="#548af7" stroke-width="2.400"/></svg>
<div class="a u" style="top:772.0px;line-height:34px;font-size:27px;color:#ced0d6;left:554.0px;letter-spacing:0.11px;">ServletContainerInitConfig</div>
<svg class="a" style="left:516.0px;top:820.0px;" width="32" height="32" viewBox="0 0 32 32" fill="none"><circle cx="16" cy="16" r="13" stroke="#548af7" stroke-width="2" fill="#25324d"/><path d="M20.800 12a6.200 6.200 0 1 0 0 8" stroke="#548af7" stroke-width="2.400"/></svg>
<div class="a u" style="top:820.0px;line-height:34px;font-size:27px;color:#ced0d6;left:554.0px;letter-spacing:0.23px;">SpringMvcConfig</div>
<svg class="a" style="left:443.0px;top:875.0px;" width="18.0" height="18.0" viewBox="0 0 20 18" fill="none"><path d="M2 5l8 8 8-8" stroke="#9da0a8" stroke-width="2.2222222222222223"/></svg>
<svg class="a" style="left:478.0px;top:868.0px;" width="32" height="34" viewBox="0 0 32 34" fill="none"><path d="M3 7a2 2 0 0 1 2-2h7l4 4h11a2 2 0 0 1 2 2v14a2 2 0 0 1-2 2H5a2 2 0 0 1-2-2Z" stroke="#ced0d6" stroke-width="2" fill="#43454a"/><circle cx="11" cy="19" r="3" stroke="#ced0d6" stroke-width="2"/></svg>
<div class="a u" style="top:868.0px;line-height:34px;font-size:27px;color:#ced0d6;left:516.0px;letter-spacing:0.40px;">controller</div>
<svg class="a" style="left:516.0px;top:916.0px;" width="32" height="32" viewBox="0 0 32 32" fill="none"><circle cx="16" cy="16" r="13" stroke="#548af7" stroke-width="2" fill="#25324d"/><path d="M20.800 12a6.200 6.200 0 1 0 0 8" stroke="#548af7" stroke-width="2.400"/></svg>
<div class="a u" style="top:916.0px;line-height:34px;font-size:27px;color:#ced0d6;left:554.0px;letter-spacing:0.14px;">UserController</div>
<svg class="a" style="left:364.0px;top:964.0px;" width="32" height="34" viewBox="0 0 32 34" fill="none"><path d="M3 7a2 2 0 0 1 2-2h7l4 4h11a2 2 0 0 1 2 2v14a2 2 0 0 1-2 2H5a2 2 0 0 1-2-2Z" stroke="#ced0d6" stroke-width="2" fill="#43454a"/><rect x="16" y="17" width="16" height="15" fill="#191a1c"/><path d="M18 20h14M18 25h14M18 30h14" stroke="#f2c55c" stroke-width="2.200"/></svg>
<div class="a u" style="top:964.0px;line-height:34px;font-size:27px;color:#ced0d6;left:402.0px;letter-spacing:0.05px;">resources</div>
<svg class="a" style="left:329.0px;top:1019.0px;" width="18.0" height="18.0" viewBox="0 0 20 18" fill="none"><path d="M2 5l8 8 8-8" stroke="#9da0a8" stroke-width="2.2222222222222223"/></svg>
<svg class="a" style="left:364.0px;top:1012.0px;" width="32" height="34" viewBox="0 0 32 34" fill="none"><path d="M3 7a2 2 0 0 1 2-2h7l4 4h11a2 2 0 0 1 2 2v14a2 2 0 0 1-2 2H5a2 2 0 0 1-2-2Z" stroke="#ced0d6" stroke-width="2" fill="#43454a"/><circle cx="11" cy="19" r="3" stroke="#548af7" stroke-width="2.400"/></svg>
<div class="a u" style="top:1012.0px;line-height:34px;font-size:27px;color:#ced0d6;left:402.0px;letter-spacing:0.07px;">webapp</div>
<svg class="a" style="left:367.0px;top:1067.0px;" width="18.0" height="18.0" viewBox="0 0 20 18" fill="none"><path d="M6 1l8 8-8 8" stroke="#9da0a8" stroke-width="2.2222222222222223"/></svg>
<svg class="a" style="left:402.0px;top:1060.0px;" width="32" height="34" viewBox="0 0 32 34" fill="none"><path d="M3 7a2 2 0 0 1 2-2h7l4 4h11a2 2 0 0 1 2 2v14a2 2 0 0 1-2 2H5a2 2 0 0 1-2-2Z" stroke="#ced0d6" stroke-width="2" fill="#43454a"/></svg>
<div class="a u" style="top:1060.0px;line-height:34px;font-size:27px;color:#ced0d6;left:440.0px;letter-spacing:-0.57px;">WEB-INF</div>
<svg class="a" style="left:407.0px;top:1109.0px;" width="22" height="18" viewBox="0 0 22 18" fill="none"><path d="M1.500 17.500V7L7 1.500H18.500a2 2 0 0 1 2 2V17.500Z" stroke="#c77d55" stroke-width="2" fill="#45322b" stroke-linejoin="round"/><path d="M1.500 7.500h6v-6" stroke="#c77d55" stroke-width="2"/></svg>
<div class="a " style="left:402px;top:1127px;width:32px;height:16px;background:#191a1c;"></div>
<div class="a u" style="top:1125.5px;line-height:18px;font-size:16.5px;color:#ced0d6;left:404.0px;letter-spacing:-0.92px;">JSP</div>
<div class="a u" style="top:1108.0px;line-height:34px;font-size:27px;color:#ced0d6;left:440.0px;letter-spacing:0.16px;">index.jsp</div>
<svg class="a" style="left:253.0px;top:1163.0px;" width="18.0" height="18.0" viewBox="0 0 20 18" fill="none"><path d="M6 1l8 8-8 8" stroke="#9da0a8" stroke-width="2.2222222222222223"/></svg>
<svg class="a" style="left:288.0px;top:1156.0px;" width="32" height="34" viewBox="0 0 32 34" fill="none"><path d="M3 7a2 2 0 0 1 2-2h7l4 4h11a2 2 0 0 1 2 2v14a2 2 0 0 1-2 2H5a2 2 0 0 1-2-2Z" stroke="#c77d55" stroke-width="2" fill="#45322b"/></svg>
<div class="a u" style="top:1156.0px;line-height:34px;font-size:27px;color:#ced0d6;left:326.0px;letter-spacing:0.49px;">target</div>
<svg class="a" style="left:288.0px;top:1204.0px;" width="32" height="32" viewBox="0 0 32 32" fill="none"><circle cx="16" cy="16" r="12.500" stroke="#ced0d6" stroke-width="2" fill="#43454a"/><path d="M7.500 24.500l17-17" stroke="#ced0d6" stroke-width="2.200"/></svg>
<div class="a u" style="top:1204.0px;line-height:34px;font-size:27px;color:#ced0d6;left:326.0px;letter-spacing:0.29px;">.gitignore</div>
<div class="a u" style="top:1246.0px;line-height:40px;font-size:40px;color:#548af7;left:289.0px;font-style:italic;font-weight:bold;">m</div>
<div class="a u" style="top:1252.0px;line-height:34px;font-size:27px;color:#ced0d6;left:326.0px;letter-spacing:-0.57px;">pom.xml</div>
</div></div>
<div class="a " style="left:823px;top:255px;width:1966px;height:1010px;background:#191a1c;border-radius:20px;"></div>
<div class="a" style="left:823px;top:255px;width:1966px;height:1010px;border-radius:20px;overflow:hidden"><div class="a" style="left:-823px;top:-255px;width:2810px;height:1844px">
<div class="a u" style="top:273.0px;line-height:44px;font-size:39px;color:#5580e0;left:854.0px;font-style:italic;">m</div>
<div class="a u" style="top:280.0px;line-height:34px;font-size:27px;color:#c0c3c9;left:895.0px;letter-spacing:-0.05px;">pom.xml (SpringMVC)</div>
<div class="a" style="left:0;top:0;opacity:0.82">
<svg class="a" style="left:1238.0px;top:281.0px;" width="32" height="32" viewBox="0 0 32 32" fill="none"><circle cx="16" cy="16" r="13" stroke="#548af7" stroke-width="2" fill="#25324d"/><path d="M20.800 12a6.200 6.200 0 1 0 0 8" stroke="#548af7" stroke-width="2.400"/></svg>
<svg class="a" style="left:1588.0px;top:281.0px;" width="32" height="32" viewBox="0 0 32 32" fill="none"><circle cx="16" cy="16" r="13" stroke="#548af7" stroke-width="2" fill="#25324d"/><path d="M20.800 12a6.200 6.200 0 1 0 0 8" stroke="#548af7" stroke-width="2.400"/></svg>
</div>
<div class="a u" style="top:280.0px;line-height:34px;font-size:27px;color:#c0c3c9;left:1280.7px;letter-spacing:0.01px;">UserController.java</div>
<div class="a u" style="top:280.0px;line-height:34px;font-size:27px;color:#c0c3c9;left:1630.7px;letter-spacing:0.07px;">SpringMvcConfig.java</div>
<div class="a " style="left:1956px;top:268px;width:482px;height:56px;background:#27304d;border-radius:11px;border:2px solid #3d5aa0;box-sizing:border-box;"></div>
<svg class="a" style="left:1972.0px;top:281.0px;" width="32" height="32" viewBox="0 0 32 32" fill="none"><circle cx="16" cy="16" r="13" stroke="#548af7" stroke-width="2" fill="#27304d"/><path d="M20.800 12a6.200 6.200 0 1 0 0 8" stroke="#548af7" stroke-width="2.400"/></svg>
<div class="a u" style="top:280.0px;line-height:34px;font-size:27px;color:#dfe1e5;left:2014.6px;letter-spacing:0.09px;">ServletContainerInitConfig.java</div>
<svg class="a" style="left:2404.0px;top:287.0px;" width="20" height="20" viewBox="0 0 20 20" fill="none"><path d="M3.500 3.500l13 13M16.500 3.500l-13 13" stroke="#9da0a8" stroke-width="2"/></svg>
<div class="a " style="left:2749px;top:282px;width:6px;height:6px;background:#ced0d6;border-radius:3px;"></div>
<div class="a " style="left:2749px;top:294px;width:6px;height:6px;background:#ced0d6;border-radius:3px;"></div>
<div class="a " style="left:2749px;top:306px;width:6px;height:6px;background:#ced0d6;border-radius:3px;"></div>
<div class="a " style="left:823px;top:336px;width:1966px;height:2px;background:#26282b;"></div>
<div class="a" style="left:823px;top:338px;width:1966px;height:927px;overflow:hidden"><div class="a" style="left:-823px;top:-338px;width:2810px;height:1844px">
<div class="a " style="left:823px;top:980px;width:1966px;height:52px;background:#1f2024;"></div>
<div class="a " style="left:970px;top:338px;width:2px;height:927px;background:#2a2c30;"></div>
<div class="a " style="left:1042px;top:772px;width:2px;height:155px;background:#313438;"></div>
<div class="a " style="left:1042px;top:1136px;width:2px;height:51px;background:#313438;"></div>
<div class="a m" style="right:1936.5px;top:307px;line-height:52px;font-size:30px;color:#4b5059">2</div>
<div class="a m" style="right:1936.5px;top:359px;line-height:52px;font-size:30px;color:#4b5059">3</div>
<div class="a m code" style="left:977px;top:358px;"><span style="color:#cf8e6d">import </span><span style="color:#bcbec4">org.springframework.lang.</span><span style="color:#b3ae60">Nullable</span><span style="color:#bcbec4">;</span></div>
<div class="a m" style="right:1936.5px;top:411px;line-height:52px;font-size:30px;color:#4b5059">4</div>
<div class="a m code" style="left:977px;top:410px;"><span style="color:#cf8e6d">import </span><span style="color:#bcbec4">org.springframework.web.context.WebApplicationContext;</span></div>
<div class="a m" style="right:1936.5px;top:463px;line-height:52px;font-size:30px;color:#4b5059">5</div>
<div class="a m code" style="left:977px;top:462px;"><span style="color:#cf8e6d">import </span><span style="color:#bcbec4">org.springframework.web.context.support.AnnotationConfigWebApplicationContext;</span></div>
<div class="a m" style="right:1936.5px;top:515px;line-height:52px;font-size:30px;color:#4b5059">6</div>
<div class="a m code" style="left:977px;top:514px;"><span style="color:#cf8e6d">import </span><span style="color:#bcbec4">org.springframework.web.servlet.support.AbstractDispatcherServletInitializer;</span></div>
<div class="a m" style="right:1936.5px;top:567px;line-height:52px;font-size:30px;color:#4b5059">7</div>
<div class="a m" style="right:1936.5px;top:619px;line-height:52px;font-size:30px;color:#4b5059">8</div>
<div class="a m code" style="left:977px;top:618px;"><span style="color:#cf8e6d">public class </span><span style="color:#bcbec4">ServletContainerInitConfig </span><span style="color:#cf8e6d">extends </span><span style="color:#bcbec4">AbstractDispatcherServletInitializer {</span></div>
<div class="a m" style="right:1936.5px;top:671px;line-height:52px;font-size:30px;color:#4b5059">9</div>
<div class="a m code" style="left:977px;top:670px;"><span style="color:#bcbec4">    </span><span style="color:#b3ae60">@Override</span></div>
<div class="a m" style="right:1936.5px;top:723px;line-height:52px;font-size:30px;color:#4b5059">10</div>
<div class="a m code" style="left:977px;top:722px;"><span style="color:#bcbec4">    </span><span style="color:#cf8e6d">protected </span><span style="color:#bcbec4">WebApplicationContext </span><span style="color:#56a8f5;text-decoration:underline wavy #93792f 1.5px;text-underline-offset:6px">createServletApplicationContext</span><span style="color:#bcbec4">() {</span></div>
<div class="a m" style="right:1936.5px;top:775px;line-height:52px;font-size:30px;color:#4b5059">11</div>
<div class="a m code" style="left:977px;top:774px;"><span style="color:#bcbec4">        AnnotationConfigWebApplicationContext ctx = </span><span style="color:#cf8e6d">new </span><span style="color:#bcbec4">AnnotationConfigWebApplicationContext();</span></div>
<div class="a m" style="right:1936.5px;top:827px;line-height:52px;font-size:30px;color:#4b5059">12</div>
<div class="a m code" style="left:977px;top:826px;"><span style="color:#bcbec4">        ctx.register(SpringMvcConfig.</span><span style="color:#cf8e6d">class</span><span style="color:#bcbec4">);</span></div>
<div class="a m" style="right:1936.5px;top:879px;line-height:52px;font-size:30px;color:#4b5059">13</div>
<div class="a m code" style="left:977px;top:878px;"><span style="color:#bcbec4">        </span><span style="color:#cf8e6d">return </span><span style="color:#bcbec4">ctx;</span></div>
<div class="a m" style="right:1936.5px;top:931px;line-height:52px;font-size:30px;color:#4b5059">14</div>
<div class="a m code" style="left:977px;top:930px;"><span style="color:#bcbec4">    }</span></div>
<div class="a m" style="right:1936.5px;top:983px;line-height:52px;font-size:30px;color:#a1a3ab">15</div>
<div class="a m" style="right:1936.5px;top:1035px;line-height:52px;font-size:30px;color:#4b5059">16</div>
<div class="a m code" style="left:977px;top:1034px;"><span style="color:#bcbec4">    </span><span style="color:#b3ae60">@Override</span></div>
<div class="a m" style="right:1936.5px;top:1087px;line-height:52px;font-size:30px;color:#4b5059">17</div>
<div class="a m code" style="left:977px;top:1086px;"><span style="color:#bcbec4">    </span><span style="color:#cf8e6d">protected </span><span style="color:#bcbec4">String[] </span><span style="color:#56a8f5;text-decoration:underline wavy #93792f 1.5px;text-underline-offset:6px">getServletMappings</span><span style="color:#bcbec4">() {</span></div>
<div class="a m" style="right:1936.5px;top:1139px;line-height:52px;font-size:30px;color:#4b5059">18</div>
<div class="a m code" style="left:977px;top:1138px;"><span style="color:#bcbec4">        </span><span style="color:#cf8e6d">return new </span><span style="color:#bcbec4">String[]{</span><span style="color:#6aab73">"/"</span><span style="color:#bcbec4">};</span></div>
<div class="a m" style="right:1936.5px;top:1191px;line-height:52px;font-size:30px;color:#4b5059">19</div>
<div class="a m code" style="left:977px;top:1190px;"><span style="color:#bcbec4">    }</span></div>
<div class="a m" style="right:1936.5px;top:1243px;line-height:52px;font-size:30px;color:#4b5059">20</div>
<div class="a u" style="top:680.0px;line-height:32px;font-size:26.5px;color:#6f737a;left:1238.5px;letter-spacing:0.97px;">no usages</div>
<div class="a u" style="top:1044.0px;line-height:32px;font-size:26.5px;color:#6f737a;left:1238.5px;letter-spacing:0.97px;">no usages</div>
<svg class="a" style="left:883.0px;top:731.0px;" width="28" height="28" viewBox="0 0 28 28" fill="none"><circle cx="14" cy="14" r="11.500" stroke="#5a9f61" stroke-width="2" fill="#2a3b2c"/><path d="M10.500 9h7M10.500 19h7M14 9v10" stroke="#5a9f61" stroke-width="2"/></svg>
<svg class="a" style="left:904.0px;top:726.0px;" width="16" height="22" viewBox="0 0 16 22" fill="none"><path d="M8 21V3M2.500 8.500L8 3l5.500 5.500" stroke="#db5c5c" stroke-width="2"/></svg>
<svg class="a" style="left:883.0px;top:1095.0px;" width="28" height="28" viewBox="0 0 28 28" fill="none"><circle cx="14" cy="14" r="11.500" stroke="#5a9f61" stroke-width="2" fill="#2a3b2c"/><path d="M10.500 9h7M10.500 19h7M14 9v10" stroke="#5a9f61" stroke-width="2"/></svg>
<svg class="a" style="left:904.0px;top:1090.0px;" width="16" height="22" viewBox="0 0 16 22" fill="none"><path d="M8 21V3M2.500 8.500L8 3l5.500 5.500" stroke="#db5c5c" stroke-width="2"/></svg>
<svg class="a" style="left:2648.0px;top:350.0px;" width="28" height="26" viewBox="0 0 28 26" fill="none"><path d="M14 2.500L26 23.500H2z" fill="#857042" stroke="#857042" stroke-width="3" stroke-linejoin="round"/><path d="M14 9v7.500" stroke="#191a1c" stroke-width="3"/><circle cx="14" cy="20.500" r="1.800" fill="#191a1c"/></svg>
<div class="a u" style="top:349.0px;line-height:30px;font-size:24px;color:#868a91;left:2681.0px;">2</div>
<svg class="a" style="left:2715.5px;top:355.5px;" width="17.0" height="17.0" viewBox="0 0 20 18" fill="none"><path d="M2 13l8-8 8 8" stroke="#b4b8bf" stroke-width="2.3529411764705883"/></svg>
<svg class="a" style="left:2757.5px;top:355.5px;" width="17.0" height="17.0" viewBox="0 0 20 18" fill="none"><path d="M2 5l8 8 8-8" stroke="#b4b8bf" stroke-width="2.3529411764705883"/></svg>
<div class="a " style="left:2770px;top:441px;width:14px;height:480px;background:#3a3b3f;border-radius:7px;"></div>
<div class="a " style="left:2761px;top:636px;width:27px;height:4px;background:#b8922f;"></div>
<div class="a " style="left:2761px;top:828px;width:27px;height:4px;background:#b8922f;"></div>
</div></div></div></div>
<div class="a " style="left:183px;top:1275px;width:2606px;height:494px;background:#191a1c;border-radius:20px;"></div>
<div class="a" style="left:183px;top:1275px;width:2606px;height:494px;border-radius:20px;overflow:hidden"><div class="a" style="left:-183px;top:-1275px;width:2810px;height:1844px">
<div class="a u" style="top:1300.0px;line-height:34px;font-size:27px;color:#ced0d6;left:208.0px;font-weight:bold;letter-spacing:0.11px;">Services</div>
<div class="a " style="left:183px;top:1356px;width:2606px;height:2px;background:#26282b;"></div>
<div class="a " style="left:764px;top:1358px;width:2px;height:411px;background:#26282b;"></div>
<svg class="a" style="left:208.0px;top:1377.0px;" width="30" height="30" viewBox="0 0 30 30" fill="none"><path d="M15 2v26M2 15h26" stroke="#ced0d6" stroke-width="2.200"/></svg>
<svg class="a" style="left:234.0px;top:1401.0px;" width="8" height="8" viewBox="0 0 8 8" fill="none"><path d="M8 0v8H0z" fill="#ced0d6"/></svg>
<svg class="a" style="left:258.0px;top:1379.0px;" width="36" height="26" viewBox="0 0 36 26" fill="none"><path d="M2 13c4-7 9-10.500 16-10.500S30 6 34 13c-4 7-9 10.500-16 10.500S6 20 2 13z" stroke="#ced0d6" stroke-width="2.200"/><circle cx="18" cy="13" r="5.500" stroke="#ced0d6" stroke-width="2.200"/></svg>
<svg class="a" style="left:286.0px;top:1401.0px;" width="8" height="8" viewBox="0 0 8 8" fill="none"><path d="M8 0v8H0z" fill="#ced0d6"/></svg>
<svg class="a" style="left:311.0px;top:1375.0px;" width="34" height="34" viewBox="0 0 34 34" fill="none"><path d="M16 9H6a3 3 0 0 0-3 3v14a3 3 0 0 0 3 3h17a3 3 0 0 0 3-3v-8" stroke="#ced0d6" stroke-width="2.200"/><path d="M25 1v14M18 8h14" stroke="#ced0d6" stroke-width="2.200"/></svg>
<div class="a " style="left:360px;top:1372px;width:2px;height:40px;background:#393b40;"></div>
<svg class="a" style="left:382.0px;top:1376.0px;" width="24" height="32" viewBox="0 0 24 32" fill="none"><path d="M4 11l8-8 8 8M4 21l8 8 8-8" stroke="#ced0d6" stroke-width="2.200"/></svg>
<svg class="a" style="left:434.0px;top:1376.0px;" width="24" height="32" viewBox="0 0 24 32" fill="none"><path d="M4 3l8 8 8-8M4 29l8-8 8 8" stroke="#ced0d6" stroke-width="2.200"/></svg>
<svg class="a" style="left:215.0px;top:1452.0px;" width="18.0" height="18.0" viewBox="0 0 20 18" fill="none"><path d="M2 5l8 8 8-8" stroke="#9da0a8" stroke-width="2.2222222222222223"/></svg>
<svg class="a" style="left:250.0px;top:1446.0px;" width="32.0" height="28.0" viewBox="0 0 32 28" fill="none"><path d="M5.500 15C4.500 11 6 8 9.500 8.500" stroke="#0c0c0c" stroke-width="1.100"/><path d="M2.500 23C5 17 10 12 17 10.500L19 15C22 18 26 21 29.500 23.500 24 22.500 19 20 15 18.500 10 18 6 20 2.500 23Z" fill="#d4a52a" stroke="#1a1408" stroke-width="0.700"/><ellipse cx="16.500" cy="13.500" rx="1.600" ry="1.100" fill="#0c0c0c"/><ellipse cx="27.600" cy="13" rx="1.500" ry="1.100" fill="#0c0c0c"/><path d="M9 21l3 2M11 17.500l1.500 1" stroke="#1a1408" stroke-width="0.900"/><path d="M17 4.500L19.500 6.500 25.500 6.500 27.800 4.500 27.300 10C26.800 13.500 24.500 16 22.500 17.200 20.500 16 18 13.500 17.500 10Z" fill="#f3dc7a" stroke="#1a1408" stroke-width="0.900"/><path d="M20 10.500h1.200M24 10.500h1.200M21.500 13.500l1 .8 1-.8" stroke="#a08a3a" stroke-width="0.700"/></svg>
<div class="a u" style="top:1444.0px;line-height:34px;font-size:27px;color:#ced0d6;left:289.0px;letter-spacing:-0.08px;">Tomcat Server</div>
<div class="a " style="left:208px;top:1484px;width:532px;height:48px;background:#393b40;border-radius:8px;"></div>
<svg class="a" style="left:288.0px;top:1493.0px;" width="32.0" height="28.0" viewBox="0 0 32 28" fill="none"><path d="M5.500 15C4.500 11 6 8 9.500 8.500" stroke="#0c0c0c" stroke-width="1.100"/><path d="M2.500 23C5 17 10 12 17 10.500L19 15C22 18 26 21 29.500 23.500 24 22.500 19 20 15 18.500 10 18 6 20 2.500 23Z" fill="#d4a52a" stroke="#1a1408" stroke-width="0.700"/><ellipse cx="16.500" cy="13.500" rx="1.600" ry="1.100" fill="#0c0c0c"/><ellipse cx="27.600" cy="13" rx="1.500" ry="1.100" fill="#0c0c0c"/><path d="M9 21l3 2M11 17.500l1.500 1" stroke="#1a1408" stroke-width="0.900"/><path d="M17 4.500L19.500 6.500 25.500 6.500 27.800 4.500 27.300 10C26.800 13.500 24.500 16 22.500 17.200 20.500 16 18 13.500 17.500 10Z" fill="#f3dc7a" stroke="#1a1408" stroke-width="0.900"/><path d="M20 10.500h1.200M24 10.500h1.200M21.500 13.500l1 .8 1-.8" stroke="#a08a3a" stroke-width="0.700"/></svg>
<svg class="a" style="left:307.0px;top:1509.0px;" width="14" height="16" viewBox="0 0 14 16" fill="none"><path d="M1 1v14l12-7z" fill="#69b353"/></svg>
<div class="a u" style="top:1492.0px;line-height:34px;font-size:27px;color:#ced0d6;left:327.0px;font-weight:bold;letter-spacing:0.21px;">Tomcat 9.0.113</div>
<div class="a u" style="top:1492.0px;line-height:34px;font-size:27px;color:#6f737a;left:530.0px;letter-spacing:0.21px;">[local]</div>
<svg class="a" style="left:250.0px;top:1542.0px;" width="32" height="28" viewBox="0 0 32 28" fill="none"><path d="M1 14h24c2 0 3-1 4-2 1 1 2 1 3 .5-1 2-2 3-4 3.500-2 6-6 10-14 10C6 26 2 22 1 14z" fill="#548af7"/><rect x="10" y="1" width="10" height="11" rx="1.500" fill="#548af7"/><circle cx="9" cy="20" r="1.700" fill="#191a1c"/></svg>
<div class="a u" style="top:1541.0px;line-height:34px;font-size:27px;color:#ced0d6;left:289.0px;letter-spacing:0.08px;">Docker</div>
<svg class="a" style="left:793.0px;top:1372.0px;" width="40" height="40" viewBox="0 0 40 40" fill="none"><path d="M27.2 14.6A11.5 11.5 0 1 0 15.0 31.3" stroke="#ced0d6" stroke-width="2.200"/><path d="M21.5 7.5h7v7.500" stroke="#ced0d6" stroke-width="2.200"/><path d="M21 21v13l11-6.500z" stroke="#5fad65" stroke-width="2.200" stroke-linejoin="round" fill="#253627"/></svg>
<svg class="a" style="left:845.0px;top:1372.0px;" width="40" height="40" viewBox="0 0 40 40" fill="none"><path d="M27.2 14.6A11.5 11.5 0 1 0 14.0 31.1" stroke="#ced0d6" stroke-width="2.200"/><path d="M21.5 7.5h7v7.500" stroke="#ced0d6" stroke-width="2.200"/></svg>
<svg class="a" style="left:863.4px;top:1391.9px;" width="20.160000000000004" height="20.160000000000004" viewBox="0 0 36 36" fill="none"><path d="M11 13.500a7 7 0 0 1 14 0v9a7 7 0 0 1-14 0z" stroke="#5fad65" stroke-width="2.600"/><path d="M12.500 10l-3-4M23.500 10l3-4M11 16l-7-2.500M25 16l7-2.500M11 21H3M25 21h8M11.500 26l-6 4M24.500 26l6 4" stroke="#5fad65" stroke-width="2.600" stroke-linecap="round"/><path d="M11.500 12.500h13" stroke="#5fad65" stroke-width="2.400"/></svg>
<div class="a " style="left:904px;top:1380px;width:24px;height:24px;background:#5e3838;border-radius:4px;border:2px solid #db5c5c;box-sizing:border-box;"></div>
<svg class="a" style="left:948.0px;top:1372.0px;" width="40" height="40" viewBox="0 0 40 40" fill="none"><path d="M29.2 15.6A11.5 11.5 0 1 0 24.4 31.2" stroke="#ced0d6" stroke-width="2.200"/><path d="M23.5 8.5h7v7.500" stroke="#ced0d6" stroke-width="2.200"/></svg>
<div class="a " style="left:1000px;top:1372px;width:2px;height:40px;background:#393b40;"></div>
<svg class="a" style="left:1016.0px;top:1376.0px;" width="36" height="32" viewBox="0 0 36 32" fill="none"><path d="M4 27a15 15 0 1 1 28 0z" stroke="#ced0d6" stroke-width="2.200" stroke-linejoin="round"/><circle cx="17" cy="20" r="2.500" stroke="#ced0d6" stroke-width="2"/><path d="M19 18l5-5" stroke="#ced0d6" stroke-width="2"/></svg>
<svg class="a" style="left:1045.0px;top:1402.0px;" width="8" height="8" viewBox="0 0 8 8" fill="none"><path d="M8 0v8H0z" fill="#ced0d6"/></svg>
<div class="a " style="left:1083px;top:1378.5px;width:5px;height:5px;background:#ced0d6;border-radius:3px;"></div>
<div class="a " style="left:1083px;top:1389.5px;width:5px;height:5px;background:#ced0d6;border-radius:3px;"></div>
<div class="a " style="left:1083px;top:1400.5px;width:5px;height:5px;background:#ced0d6;border-radius:3px;"></div>
<div class="a " style="left:1145px;top:1366px;width:115px;height:54px;background:#26282c;border-radius:11px;border:2px solid #393b40;box-sizing:border-box;"></div>
<div class="a u" style="top:1376.0px;line-height:34px;font-size:27px;color:#dfe1e5;left:1162.5px;letter-spacing:-0.25px;">Server</div>
<svg class="a" style="left:1292.0px;top:1380.0px;" width="30" height="26" viewBox="0 0 30 26" fill="none"><rect x="1.500" y="1.500" width="27" height="23" rx="3.500" stroke="#ced0d6" stroke-width="2" fill="#2b2d30"/><path d="M7 8l4.500 4L7 16M13.500 18h7" stroke="#ced0d6" stroke-width="2"/></svg>
<div class="a u" style="top:1376.0px;line-height:34px;font-size:27px;color:#ced0d6;left:1333.0px;letter-spacing:0.07px;">Tomcat Localhost Log</div>
<svg class="a" style="left:1681.0px;top:1380.0px;" width="30" height="26" viewBox="0 0 30 26" fill="none"><rect x="1.500" y="1.500" width="27" height="23" rx="3.500" stroke="#ced0d6" stroke-width="2" fill="#2b2d30"/><path d="M7 8l4.500 4L7 16M13.500 18h7" stroke="#ced0d6" stroke-width="2"/></svg>
<div class="a u" style="top:1376.0px;line-height:34px;font-size:27px;color:#ced0d6;left:1721.0px;letter-spacing:-0.11px;">Tomcat Catalina Log</div>
<div class="a " style="left:766px;top:1426px;width:2023px;height:2px;background:#26282b;"></div>
<div class="a " style="left:766px;top:1428px;width:2px;height:341px;background:#222427;"></div>
<div class="a " style="left:780px;top:1428px;width:2px;height:341px;background:#222427;"></div>
<div class="a " style="left:783.5px;top:1428px;width:2px;height:341px;background:#222427;"></div>
<div class="a " style="left:861.5px;top:1428px;width:2px;height:341px;background:#222427;"></div>
<div class="a " style="left:864.5px;top:1428px;width:2px;height:341px;background:#222427;"></div>
<svg class="a" style="left:772.0px;top:1461.0px;" width="10" height="16" viewBox="0 0 10 16" fill="none"><path d="M2.500 3l5 8" stroke="#5fad65" stroke-width="3.200" stroke-linecap="round"/></svg>
<svg class="a" style="left:807.0px;top:1446.0px;" width="34" height="34" viewBox="0 0 34 34" fill="none"><path d="M2 17h29M23 9l8 8-8 8" stroke="#5fad65" stroke-width="2.200"/><path d="M12 10l6-7M12 24l6 7M11 3h7v7M11 31h7v-7" stroke="#5fad65" stroke-width="2"/></svg>
<svg class="a" style="left:807.0px;top:1499.0px;" width="34" height="34" viewBox="0 0 34 34" fill="none"><path d="M32 17H3M11 9l-8 8 8 8" stroke="#5a5d63" stroke-width="2.200"/><path d="M16 10l6-7M16 24l6 7M15 3h7v7M15 31h7v-7" stroke="#5a5d63" stroke-width="2"/></svg>
<svg class="a" style="left:806.0px;top:1554.0px;" width="36" height="30" viewBox="0 0 36 30" fill="none"><path d="M5 13a13 13 0 0 1 24-3M31 17a13 13 0 0 1-24 3" stroke="#ced0d6" stroke-width="2.200"/><path d="M1 9l4.500 5 5-4.500M35 21l-4.500-5-5 4.500" stroke="#ced0d6" stroke-width="2.200"/></svg>
<svg class="a" style="left:807.0px;top:1607.0px;" width="34" height="30" viewBox="0 0 34 30" fill="none"><rect x="1.500" y="1.500" width="26" height="21" rx="3" stroke="#ced0d6" stroke-width="2" fill="#43454a"/><path d="M6 7h4M12 7h4" stroke="#ced0d6" stroke-width="2"/><rect x="17" y="12" width="16" height="18" fill="#191a1c"/><path d="M26 12v16M19.500 21.500L26 28l6.500-6.500" stroke="#5fad65" stroke-width="2.200"/></svg>
<div class="a" style="left:868px;top:1428px;width:1842px;height:341px;overflow:hidden"><div class="a" style="left:-868px;top:-1428px;width:2810px;height:1844px">
<div class="a m code" style="left:892.5px;top:1407px;color:#e8596a">25-Jan-2026 14:29:07.473 信息 [RMI TCP Connection(2)-127.0.0.1] org.springframework.web.servlet.FrameworkServlet</div>
<div class="a m code" style="left:892.5px;top:1459px;color:#bcbec4">[2026-01-25 02:29:07,480] Artifact SpringMVC:war exploded: Artifact is deployed successfully</div>
<div class="a m code" style="left:892.5px;top:1511px;color:#bcbec4">[2026-01-25 02:29:07,480] Artifact SpringMVC:war exploded: Deploy took 513 milliseconds</div>
<div class="a m code" style="left:892.5px;top:1563px;color:#e8596a">25-Jan-2026 14:29:16.783 信息 [Catalina-utility-2] org.apache.catalina.startup.HostConfig.deployDirectory</div>
<div class="a m code" style="left:892.5px;top:1615px;color:#e8596a">25-Jan-2026 14:29:16.827 信息 [Catalina-utility-2] org.apache.catalina.startup.HostConfig.deployDirectory</div>
<div class="a m code" style="left:892.5px;top:1667px;color:#bcbec4">&gt;&gt;&gt; Save ...</div>
</div></div>
<div class="a " style="left:2710px;top:1428px;width:2px;height:341px;background:#26282b;"></div>
<svg class="a" style="left:2736.8px;top:1448.9px;" width="26.4" height="28.2" viewBox="0 0 30 32" fill="none"><path d="M15 30V3M5 13L15 3l10 10" stroke="#ced0d6" stroke-width="2.200"/></svg>
<svg class="a" style="left:2736.8px;top:1501.9px;" width="26.4" height="28.2" viewBox="0 0 30 32" fill="none"><path d="M15 2v27M5 19l10 10 10-10" stroke="#ced0d6" stroke-width="2.200"/></svg>
<svg class="a" style="left:2735.9px;top:1556.7px;" width="28.2" height="24.6" viewBox="0 0 32 28" fill="none"><path d="M2 3h28M2 14h22a5 5 0 0 1 0 10h-8M2 25h6" stroke="#ced0d6" stroke-width="2.200"/><path d="M20 19l-5 5 5 5" stroke="#ced0d6" stroke-width="2.200"/></svg>
<svg class="a" style="left:2735.9px;top:1608.7px;" width="28.2" height="24.6" viewBox="0 0 32 28" fill="none"><path d="M2 3h13M2 13h9M2 26h28M22 1v17M15 11l7 7 7-7" stroke="#ced0d6" stroke-width="2.200"/></svg>
<svg class="a" style="left:2735.1px;top:1658.8px;" width="29.9" height="26.4" viewBox="0 0 34 30" fill="none"><path d="M8 9V4a2 2 0 0 1 2-2h14a2 2 0 0 1 2 2v5" stroke="#ced0d6" stroke-width="2.200"/><rect x="2" y="9" width="30" height="15" rx="3" stroke="#ced0d6" stroke-width="2.200"/><rect x="9" y="18" width="16" height="10" fill="#191a1c" stroke="#ced0d6" stroke-width="2.200"/></svg>
<svg class="a" style="left:2736.8px;top:1707.9px;" width="26.4" height="28.2" viewBox="0 0 30 32" fill="none"><path d="M2 7h26M10 7V4a2 2 0 0 1 2-2h6a2 2 0 0 1 2 2v3M5 7v20a3 3 0 0 0 3 3h14a3 3 0 0 0 3-3V7M12 14v9M18 14v9" stroke="#ced0d6" stroke-width="2.200"/></svg>
</div></div>
<div class="a " style="left:130px;top:1795px;width:16px;height:16px;background:#25324d;border-radius:4px;border:2px solid #548af7;box-sizing:border-box;"></div>
<div class="a u" style="top:1786.0px;line-height:34px;font-size:26.5px;color:#9da0a8;left:154.7px;letter-spacing:0.03px;">SpringMVC</div>
<div class="a u" style="top:1786.0px;line-height:34px;font-size:26.5px;color:#9da0a8;left:340.0px;letter-spacing:0.43px;">src</div>
<div class="a u" style="top:1786.0px;line-height:34px;font-size:26.5px;color:#9da0a8;left:426.0px;letter-spacing:-0.11px;">main</div>
<div class="a u" style="top:1786.0px;line-height:34px;font-size:26.5px;color:#9da0a8;left:531.0px;letter-spacing:0.10px;">java</div>
<div class="a u" style="top:1786.0px;line-height:34px;font-size:26.5px;color:#9da0a8;left:629.0px;letter-spacing:0.65px;">com</div>
<div class="a u" style="top:1786.0px;line-height:34px;font-size:26.5px;color:#9da0a8;left:732.0px;letter-spacing:-0.04px;">xekoner</div>
<div class="a u" style="top:1786.0px;line-height:34px;font-size:26.5px;color:#9da0a8;left:876.0px;letter-spacing:0.82px;">config</div>
<svg class="a" style="left:307.5px;top:1795.5px;" width="17.0" height="17.0" viewBox="0 0 20 18" fill="none"><path d="M6 1l8 8-8 8" stroke="#9da0a8" stroke-width="2.3529411764705883"/></svg>
<svg class="a" style="left:392.5px;top:1795.5px;" width="17.0" height="17.0" viewBox="0 0 20 18" fill="none"><path d="M6 1l8 8-8 8" stroke="#9da0a8" stroke-width="2.3529411764705883"/></svg>
<svg class="a" style="left:498.0px;top:1795.5px;" width="17.0" height="17.0" viewBox="0 0 20 18" fill="none"><path d="M6 1l8 8-8 8" stroke="#9da0a8" stroke-width="2.3529411764705883"/></svg>
<svg class="a" style="left:596.0px;top:1795.5px;" width="17.0" height="17.0" viewBox="0 0 20 18" fill="none"><path d="M6 1l8 8-8 8" stroke="#9da0a8" stroke-width="2.3529411764705883"/></svg>
<svg class="a" style="left:697.5px;top:1795.5px;" width="17.0" height="17.0" viewBox="0 0 20 18" fill="none"><path d="M6 1l8 8-8 8" stroke="#9da0a8" stroke-width="2.3529411764705883"/></svg>
<svg class="a" style="left:843.0px;top:1795.5px;" width="17.0" height="17.0" viewBox="0 0 20 18" fill="none"><path d="M6 1l8 8-8 8" stroke="#9da0a8" stroke-width="2.3529411764705883"/></svg>
<svg class="a" style="left:967.0px;top:1795.5px;" width="17.0" height="17.0" viewBox="0 0 20 18" fill="none"><path d="M6 1l8 8-8 8" stroke="#9da0a8" stroke-width="2.3529411764705883"/></svg>
<svg class="a" style="left:1000.0px;top:1788.0px;" width="32" height="32" viewBox="0 0 32 32" fill="none"><circle cx="16" cy="16" r="13" stroke="#548af7" stroke-width="2" fill="#25324d"/><path d="M20.800 12a6.200 6.200 0 1 0 0 8" stroke="#548af7" stroke-width="2.400"/></svg>
<div class="a u" style="top:1786.0px;line-height:34px;font-size:26.5px;color:#9da0a8;left:1041.0px;letter-spacing:0.36px;">ServletContainerInitConfig</div>
<div class="a u" style="top:1788.0px;line-height:34px;font-size:26.5px;color:#9da0a8;left:2364.0px;letter-spacing:-0.14px;">15:5</div>
<div class="a u" style="top:1788.0px;line-height:34px;font-size:26.5px;color:#9da0a8;left:2449.0px;letter-spacing:-0.96px;">LF</div>
<div class="a u" style="top:1788.0px;line-height:34px;font-size:26.5px;color:#9da0a8;left:2512.0px;letter-spacing:0.19px;">UTF-8</div>
<svg class="a" style="left:2619.0px;top:1787.0px;" width="30" height="32" viewBox="0 0 30 32" fill="none"><path d="M17 29H5a3 3 0 0 1-3-3V5a3 3 0 0 1 3-3h17a3 3 0 0 1 3 3v11" stroke="#9da0a8" stroke-width="2.200"/><path d="M7 9h13M7 15h13M7 21h6" stroke="#9da0a8" stroke-width="2.200"/><circle cx="21" cy="23" r="4.500" stroke="#9da0a8" stroke-width="2.200"/><path d="M24.500 26.500l4.500 4.500" stroke="#9da0a8" stroke-width="2.200"/></svg>
<div class="a u" style="top:1788.0px;line-height:34px;font-size:26.5px;color:#9da0a8;left:2661.0px;letter-spacing:0.37px;">4 spaces</div>
<div class="a " style="left:2807px;top:1801px;width:8px;height:17px;border-radius:4px;border:2.5px solid #9da0a8;box-sizing:border-box;"></div>
<div class="a " style="left:608px;top:144px;width:418px;height:10px;background:#93d53a;border-radius:5px;"></div>
<div class="a " style="left:2px;top:214px;width:216px;height:114px;border-radius:9px;border:8px solid #93d53a;box-sizing:border-box;"></div>
<div class="a " style="left:222px;top:532px;width:632px;height:432px;border-radius:9px;border:8px solid #93d53a;box-sizing:border-box;"></div>
<div class="a " style="left:842px;top:1649px;width:334px;height:85px;border-radius:9px;border:8px solid #93d53a;box-sizing:border-box;"></div>
</div></body></html>
